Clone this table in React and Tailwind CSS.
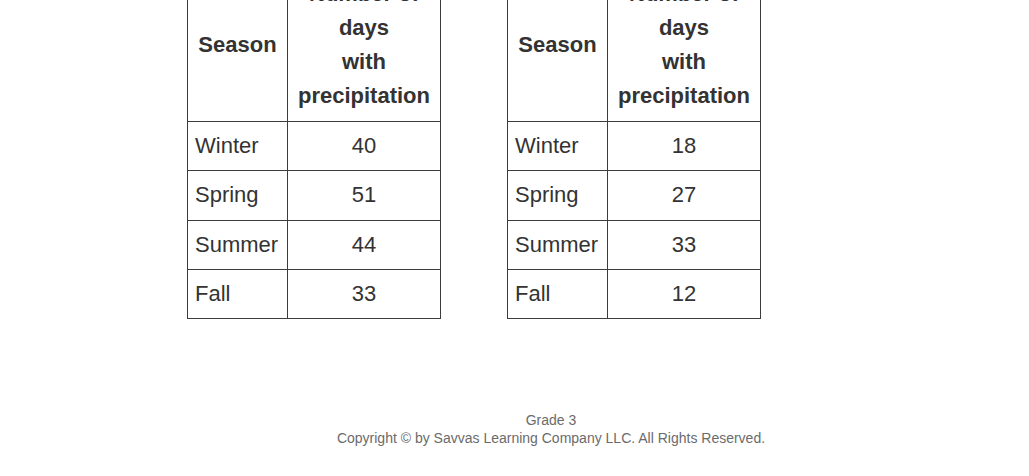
const tables = [
  [
    ["Winter", 40],
    ["Spring", 51],
    ["Summer", 44],
    ["Fall", 33],
  ],
  [
    ["Winter", 18],
    ["Spring", 27],
    ["Summer", 33],
    ["Fall", 12],
  ],
];

function SeasonTable({ rows }) {
  return (
    <table className="border-collapse table-fixed w-[253px] text-[22px] text-[#333]">
      <colgroup>
        <col className="w-[100px]" />
        <col className="w-[153px]" />
      </colgroup>
      <thead>
        <tr>
          <th className="border border-[#3c3c3c] font-bold text-center px-[7px] py-[8px] leading-[34px]">Season</th>
          <th className="border border-[#3c3c3c] font-bold text-center px-2 py-[8px] leading-[34px]">
            Number of
            <br />
            days
            <br />
            with
            <br />
            precipitation
          </th>
        </tr>
      </thead>
      <tbody>
        {rows.map(([season, days]) => (
          <tr key={season} className="h-[49.3px]">
            <td className="border border-[#3c3c3c] px-[7px] leading-[26px]">{season}</td>
            <td className="border border-[#3c3c3c] px-2 text-center leading-[26px]">{days}</td>
          </tr>
        ))}
      </tbody>
    </table>
  );
}

export default function App() {
  return (
    <div className="w-[1029px] h-[476px] overflow-hidden bg-white font-['Liberation_Sans',Arial,sans-serif]">
      {/* tables, top cut off */}
      <div className="flex gap-[66px] pl-[187px] -mt-[32px]">
        {tables.map((rows, i) => (
          <SeasonTable key={i} rows={rows} />
        ))}
      </div>

      {/* footer */}
      <div className="pl-[73px] mt-[92px] text-center text-[14px] leading-[18px] text-[#6b6b6b]">
        <p>Grade 3</p>
        <p>Copyright © by Savvas Learning Company LLC. All Rights Reserved.</p>
      </div>
    </div>
  );
}
